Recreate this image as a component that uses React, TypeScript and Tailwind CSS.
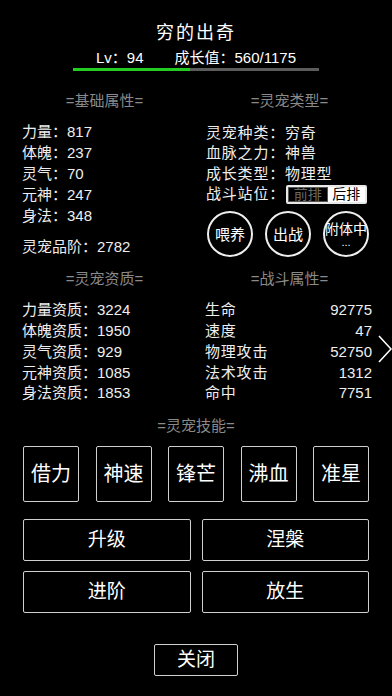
import React from 'react';

const FONT = { fontFamily: '"Liberation Sans", "Noto Sans CJK SC", sans-serif' };

const baseStats = [
  ['力量', '817'],
  ['体魄', '237'],
  ['灵气', '70'],
  ['元神', '247'],
  ['身法', '348'],
];

const petType = [
  ['灵宠种类', '穷奇'],
  ['血脉之力', '神兽'],
  ['成长类型', '物理型'],
];

const aptitude = [
  ['力量资质', '3224'],
  ['体魄资质', '1950'],
  ['灵气资质', '929'],
  ['元神资质', '1085'],
  ['身法资质', '1853'],
];

const battle = [
  ['生命', '92775'],
  ['速度', '47'],
  ['物理攻击', '52750'],
  ['法术攻击', '1312'],
  ['命中', '7751'],
];

const skills = ['借力', '神速', '锋芒', '沸血', '准星'];

function Header({ children }: { children: React.ReactNode }) {
  return (
    <div className="text-center text-[15px] leading-[20px] text-[#8a8a8a]">={children}=</div>
  );
}

function Circle({ children }: { children: React.ReactNode }) {
  return (
    <div className="w-[46px] h-[46px] shrink-0 rounded-full border-2 border-[#eeeeee] flex flex-col items-center justify-center text-[15px] leading-[17px] tracking-normal whitespace-nowrap text-white">
      {children}
    </div>
  );
}

export default function App() {
  const progress = (560 / 1175) * 100;

  return (
    <div className="relative w-[392px] h-[696px] bg-black text-[#eeeeee] overflow-hidden" style={FONT}>
      <div className="pt-[21px] text-center text-[18px] leading-[24px] tracking-[2px] text-white">穷的出奇</div>
      <div className="mt-[3px] flex justify-center gap-[31px] text-[15px] leading-[20px] text-white">
        <span>Lv：94</span>
        <span>成长值：560/1175</span>
      </div>
      <div className="mx-[73px] h-[3px] bg-[#5c5c5c] mt-0">
        <div className="h-full bg-[#22cc22]" style={{ width: `${progress}%` }} />
      </div>

      <div className="mt-[20px] pl-[22px] pr-[20px] grid grid-cols-2 gap-x-[20px]">
        <div>
          <Header>基础属性</Header>
          <div className="mt-[10px] text-[15px] leading-[21px]">
            {baseStats.map(([k, v]) => (
              <div key={k}>
                {k}：{v}
              </div>
            ))}
          </div>
          <div className="mt-[10px] text-[15px] leading-[21px]">灵宠品阶：2782</div>
        </div>
        <div>
          <Header>灵宠类型</Header>
          <div className="mt-[12px] text-[15px] leading-[20.3px] -ml-[1px]">
            {petType.map(([k, v]) => (
              <div key={k} className="tracking-[0.8px]">
                {k}：{v}
              </div>
            ))}
            <div className="flex items-center">
              <span className="tracking-[0.8px]">战斗站位：</span>
              <div className="ml-[1px] flex h-[19px] w-[81px] shrink-0 rounded-[2px] border-2 border-[#e8e8e8] overflow-hidden text-[14px] leading-[14px] tracking-normal whitespace-nowrap">
                <div className="flex-1 flex items-center justify-center border border-[#555555] bg-black text-[#6a6a6a]">前排</div>
                <div className="flex-1 flex items-center justify-center bg-white text-black">后排</div>
              </div>
            </div>
          </div>
          <div className="mt-[7px] flex gap-[12px]">
            <Circle>喂养</Circle>
            <Circle>出战</Circle>
            <Circle>
              <span className="text-[14px] leading-[16px]">附体中</span>
              <span className="text-[11px] leading-[10px]">...</span>
            </Circle>
          </div>
        </div>
      </div>

      <div className="mt-[12px] pl-[22px] pr-[20px] grid grid-cols-2 gap-x-[20px]">
        <div>
          <Header>灵宠资质</Header>
          <div className="mt-[11px] text-[15px] leading-[20.8px]">
            {aptitude.map(([k, v]) => (
              <div key={k}>
                {k}：{v}
              </div>
            ))}
          </div>
        </div>
        <div>
          <Header>战斗属性</Header>
          <div className="mt-[11px] text-[15px] leading-[20.8px] -ml-[2px]">
            {battle.map(([k, v]) => (
              <div key={k} className="flex justify-between">
                <span className="tracking-[0.8px]">{k}</span>
                <span>{v}</span>
              </div>
            ))}
          </div>
        </div>
      </div>

      <svg className="absolute left-[378px] top-[335px]" width="14" height="28" viewBox="0 0 14 28" fill="none">
        <path d="M1 1 L13 14 L1 27" stroke="#ffffff" strokeWidth="1.6" />
      </svg>

      <div className="mt-[12px]">
        <Header>灵宠技能</Header>
      </div>
      <div className="mt-[10px] px-[23px] flex justify-between">
        {skills.map((s) => (
          <div
            key={s}
            className="w-[56px] h-[56px] rounded-[2px] border-[1.5px] border-[#cfcfcf] flex items-center justify-center text-[20px] text-white"
          >
            {s}
          </div>
        ))}
      </div>

      <div className="mt-[17px] px-[23px] grid grid-cols-2 gap-x-[11px] gap-y-[10px]">
        {['升级', '涅槃', '进阶', '放生'].map((b) => (
          <div
            key={b}
            className="h-[42px] rounded-[2px] border-[1.5px] border-[#cfcfcf] flex items-center justify-center text-[19px] text-white"
          >
            {b}
          </div>
        ))}
      </div>

      <div className="mt-[31px] flex justify-center">
        <div className="w-[84px] h-[32px] rounded-[2px] border-[1.5px] border-[#cfcfcf] flex items-center justify-center text-[19px] text-white">
          关闭
        </div>
      </div>
    </div>
  );
}
